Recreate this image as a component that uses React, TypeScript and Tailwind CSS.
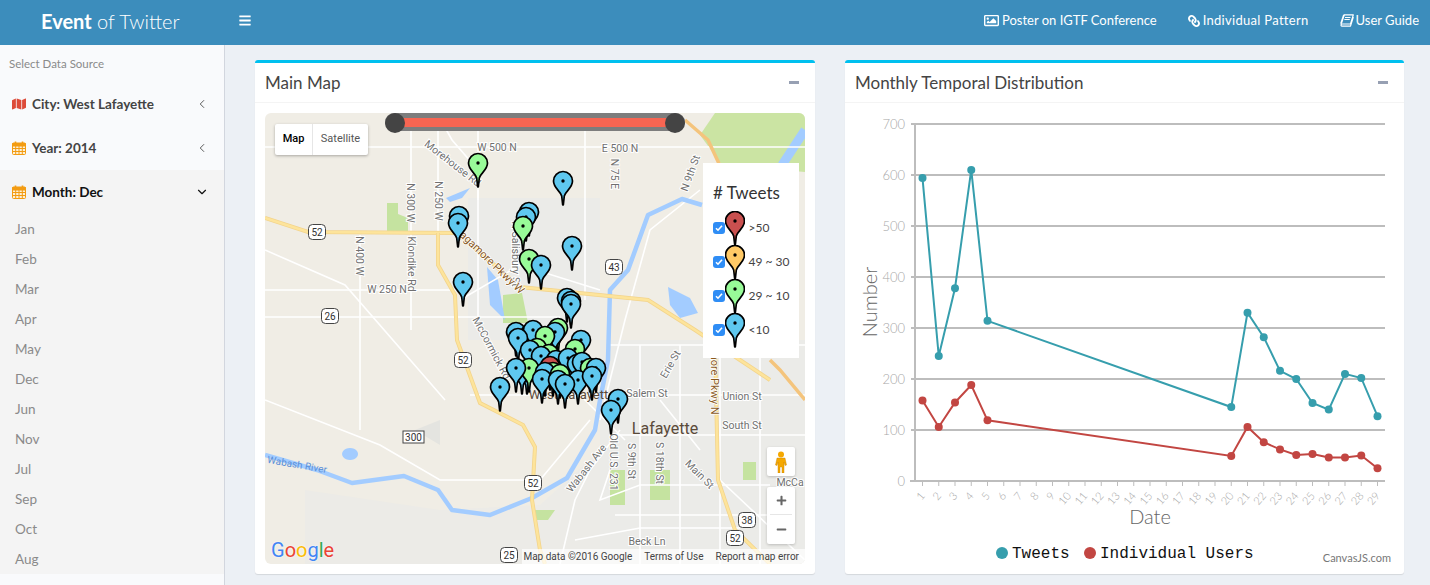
import React from 'react';
import { FaMap, FaBars, FaRegImage, FaLink, FaMinus, FaPlus } from 'react-icons/fa';
import { ChevronLeft, ChevronDown } from 'lucide-react';

const UI_FONT = { fontFamily: '"Lato", "Noto Sans", sans-serif' };
const months = ['Jan', 'Feb', 'Mar', 'Apr', 'May', 'Dec', 'Jun', 'Nov', 'Jul', 'Sep', 'Oct', 'Aug'];

const BLUE = '#5fc8ef';
const GREEN = '#98fb98';
const RED = '#c9504f';
const ORANGE = '#ffc966';

const Calendar = () => (
  <svg width="14" height="14" viewBox="0 0 14 14" fill="none" stroke="#f39c12" strokeWidth="1">
    <rect x="0.5" y="2" width="13" height="11.5" rx="1" fill="#fdf0d8" />
    <path d="M0.5 2.5h13v2.5h-13z" fill="#f39c12" />
    <path d="M0.5 7.5h13M0.5 10.500h13M3.7 5v8.5M7 5v8.5M10.3 5v8.5" />
    <path d="M3.5 0.5v3M10.5 0.5v3" strokeWidth="1.6" />
  </svg>
);

const BookIcon = () => (
  <svg width="14" height="13" viewBox="0 0 14 13" fill="none" stroke="#fff" strokeWidth="1.2" strokeLinejoin="round">
    <path d="M4 0.8H13.300L10.500 10H2.200C0.800 10 0.500 11.800 1.800 12.200H10.500L13.300 3" />
    <path d="M4 0.800L1 9.800" strokeWidth="1.800" />
    <path d="M5 3.500H10.500M4.400 5.500H9.800" strokeWidth="1" />
  </svg>
);

const Pin = ({ x, y, fill }: { x: number; y: number; fill: string }) => (
  <g transform={`translate(${x} ${y})`}>
    <path d="M-0.300 0L-1.300 -9C-2.500 -14 -9.500 -17 -9.500 -24A9.500 9.500 0 1 1 9.500 -24C9.500 -17 2.500 -14 1.300 -9L0.300 0Z" fill={fill} stroke="#000" strokeWidth="1.700" strokeLinejoin="round" />
    <circle cx="0" cy="-24" r="1.700" fill="#000" />
  </g>
);

const pins: [number, number, string][] = [
  [478, 187, GREEN], [563, 205, BLUE], [459, 240, BLUE], [458, 247, BLUE],
  [529, 236, BLUE], [526, 241, BLUE], [523, 250, GREEN], [572, 270, BLUE],
  [529, 283, GREEN], [541, 289, BLUE], [463, 306, BLUE],
  [567, 322, BLUE], [571, 325, BLUE], [571, 328, BLUE],
  [516, 356, BLUE], [530, 358, GREEN], [533, 354, BLUE], [558, 352, GREEN], [555, 356, BLUE],
  [545, 360, GREEN], [518, 362, BLUE], [581, 364, BLUE], [537, 372, GREEN], [530, 374, BLUE],
  [575, 373, GREEN], [549, 378, GREEN], [541, 380, BLUE], [556, 384, BLUE], [550, 390, RED], [568, 382, BLUE],
  [577, 388, BLUE], [582, 386, BLUE], [527, 394, BLUE], [522, 394, BLUE], [529, 392, GREEN], [516, 392, BLUE],
  [590, 392, GREEN], [596, 392, BLUE], [553, 396, GREEN], [545, 396, BLUE], [560, 398, GREEN],
  [542, 403, BLUE], [558, 404, BLUE], [578, 404, BLUE], [592, 400, BLUE], [565, 408, BLUE],
  [500, 411, BLUE], [618, 423, BLUE], [611, 434, BLUE],
];

const whiteRoads = [
  'M265 147H805', 'M265 317H560', 'M265 290H470', 'M411 113V330', 'M438 113V235', 'M360 235V430', 'M478 113V200',
  'M265 250L345 285L445 400', 'M478 170L452 140L438 115', 'M478 190V330', 'M585 113V300', 'M460 300L520 265L600 290',
  'M265 400L380 445L440 480H540L590 420', 'M470 395H610', 'M605 395H805', 'M610 435H805', 'M640 345V564', 'M680 345V564',
  'M720 345V564', 'M760 345V564', 'M610 345H805', 'M615 515H770', 'M560 564L575 500L590 470L620 430',
  'M720 480L805 560', 'M580 395L625 440', 'M610 470L600 500L640 485H770', 'M700 190L650 230L625 320L600 420',
  'M575 540L640 528H740', 'M660 400L700 450',
];

const Shield = ({ x, y, t }: { x: number; y: number; t: string }) => (
  <g>
    <rect x={x - 8.5} y={y - 7.5} width="17" height="15" rx="4" fill="#fff" stroke="#444" />
    <text x={x} y={y + 3.5} textAnchor="middle" fontSize="10" fill="#333">{t}</text>
  </g>
);

const mapLabels: [string, number, number, number][] = [
  ['W 500 N', 497, 151, 0], ['E 500 N', 620, 152, 0], ['N 300 W', 411, 207, 90], ['N 250 W', 439, 205, 90],
  ['N 400 W', 360, 260, 90], ['Klondike Rd', 412, 268, 90], ['W 250 N', 387, 293, 0], ['Morehouse Rd', 453, 167, 38],
  ['N 75 E', 615, 178, 90], ['N 9th St', 690, 177, -70], ['N Salisbury St', 516, 258, 90], ['McCormick Rd', 492, 352, 62],
  ['Salem St', 647, 397, 0], ['Erie St', 670, 368, -60], ['Union St', 742, 400, 0], ['South St', 742, 429, 0],
  ['Old U.S. 231', 614, 466, 90], ['S 9th St', 632, 465, 90], ['S 18th St', 660, 467, 90], ['Main St', 700, 478, 45],
  ['Wabash Ave', 586, 472, -52], ['Beck Ln', 647, 545, 0], ['McCa', 790, 486, 0],
];

const MapDrawing = () => (
  <svg viewBox="265 113 540 451" className="block w-full h-full" style={{ fontFamily: 'Roboto, sans-serif' }}>
    <rect x="265" y="113" width="540" height="451" fill="#f0ede5" />
    <path d="M468 198H600V340H468Z" fill="#ebebe8" />
    <path d="M600 340H805V564H600Z" fill="#ebebe8" />
    <path d="M305 490L440 510L540 505L600 450V564H305Z" fill="#ecebe7" />
    <path d="M715 113H805V172L722 165L700 135Z" fill="#cbe4a3" />
    <path d="M387 203H398V214L408 218V232H387Z" fill="#c5e3a0" />
    <path d="M503 295L522 293L528 323L503 323Z" fill="#c5e3a0" />
    <path d="M650 470L670 470V500H650Z" fill="#c5e3a0" />
    <path d="M610 470H625V505H610Z" fill="#c5e3a0" />
    <path d="M535 510H555L548 520H535Z" fill="#c5e3a0" />
    <path d="M743 462H756V480H743Z" fill="#c5e3a0" />
    <path d="M415 430L440 445V420Z" fill="#e4e4e0" />
    <path d="M446 198L470 188L462 198L450 202Z" fill="#a3ccff" />
    <path d="M487 267L498 280L505 320L490 305Z" fill="#a3ccff" />
    <path d="M668 287L690 298L698 313L680 318L670 305Z" fill="#a3ccff" />
    <path d="M350 448a8 6 0 1 0 0.1 0Z" fill="#a3ccff" />
    <path d="M805 130L782 165" stroke="#a3ccff" strokeWidth="9" fill="none" />
    {whiteRoads.map((d) => <path key={d} d={d} stroke="#fff" strokeWidth="1.6" fill="none" />)}
    <path d="M702 205L682 199L648 215L628 270L610 290L608 360L600 400L595 430L567 478L532 498L490 515L452 510L438 490L404 476L352 483L317 470L265 455" stroke="#a3ccff" strokeWidth="4.5" fill="none" strokeLinejoin="round" />
    <path d="M265 218L308 232L457 233L520 287L648 300L695 330L770 380" stroke="#f3d48c" strokeWidth="4" fill="none" />
    <path d="M265 218L308 232L457 233L520 287L648 300L695 330L770 380" stroke="#fde49b" strokeWidth="2.4" fill="none" />
    <path d="M438 233V265L455 295L457 340L480 403L523 425L535 447L532 500L540 550L545 564" stroke="#f3d48c" strokeWidth="4" fill="none" />
    <path d="M438 233V265L455 295L457 340L480 403L523 425L535 447L532 500L540 550L545 564" stroke="#fde49b" strokeWidth="2.4" fill="none" />
    <path d="M685 120L708 140L722 170M770 360L780 370L805 400" stroke="#f4c47c" strokeWidth="3.5" fill="none" />
    <path d="M715 345L718 480L735 530L770 564" stroke="#f3d48c" strokeWidth="4" fill="none" />
    <path d="M715 345L718 480L735 530L770 564" stroke="#fde49b" strokeWidth="2.4" fill="none" />
    {mapLabels.map(([t, x, y, r]) => (
      <text key={t} x={x} y={y} textAnchor="middle" fontSize="10.5" fill="#707070" stroke="#fff" strokeWidth="2" style={{ paintOrder: 'stroke' }} transform={`rotate(${r} ${x} ${y - 4})`}>{t}</text>
    ))}
    <text x="490" y="264" textAnchor="middle" fontSize="11" fill="#8a5a1e" stroke="#fff" strokeWidth="1.5" style={{ paintOrder: 'stroke' }} transform="rotate(44 490 260)">Sagamore Pkwy W</text>
    <text x="715" y="374" textAnchor="middle" fontSize="11" fill="#8a5a1e" stroke="#fff" strokeWidth="1.5" style={{ paintOrder: 'stroke' }} transform="rotate(90 715 370)">Sagamore Pkwy N</text>
    <text x="297" y="468" textAnchor="middle" fontSize="10" fill="#5a8fd8" transform="rotate(10 297 465)">Wabash River</text>
    <text x="572" y="399" textAnchor="middle" fontSize="13" fill="#5a4a3a">West Lafayette</text>
    <text x="665" y="434" textAnchor="middle" fontSize="16" fill="#5a4a3a">Lafayette</text>
    <Shield x={317} y={232} t="52" />
    <Shield x={330} y={316} t="26" />
    <Shield x={614} y={267} t="43" />
    <Shield x={463} y={360} t="52" />
    <Shield x={533} y={483} t="52" />
    <Shield x={747} y={520} t="38" />
    <Shield x={735} y={538} t="52" />
    <Shield x={509} y={555} t="25" />
    <rect x="403" y="431" width="21" height="12" fill="#fff" stroke="#444" />
    <text x="413.5" y="441" textAnchor="middle" fontSize="10" fill="#333">300</text>
    {pins.map(([x, y, c], i) => <Pin key={i} x={x} y={y} fill={c} />)}
  </svg>
);

const legendRows = [
  { label: '>50', color: RED },
  { label: '49 ~ 30', color: ORANGE },
  { label: '29 ~ 10', color: GREEN },
  { label: '<10', color: BLUE },
];

const MapPanel = () => (
  <div className="relative h-[451px] overflow-hidden rounded-[6px]">
    <MapDrawing />
    {/* range slider */}
    <div className="absolute left-[120px] top-0 w-[300px] h-[18px] rounded-full bg-[#7d7d7d]">
      <div className="mx-[10px] mt-[5px] h-[9px] bg-[#f76552]" />
      <div className="absolute left-0 top-0 w-5 h-5 rounded-full bg-[#444]" />
      <div className="absolute right-0 top-0 w-5 h-5 rounded-full bg-[#444]" />
    </div>
    {/* map type */}
    <div className="absolute left-[10px] top-[11px] flex h-[31px] bg-white rounded-[2px] shadow-[0_1px_3px_rgba(0,0,0,0.3)] text-[11px]" style={{ fontFamily: 'Roboto, sans-serif' }}>
      <div className="w-[38px] flex items-center justify-center font-medium text-black border-r border-[#e6e6e6]">Map</div>
      <div className="w-[55px] flex items-center justify-center text-[#565656]">Satellite</div>
    </div>
    {/* legend */}
    <div className="absolute left-[438px] top-[50px] w-[96px] h-[195px] bg-white pl-[10px] pt-[19px]" style={UI_FONT}>
      <div className="text-[#333] text-[17px] leading-[22px]">
        # Tweets
      </div>
      <div className="mt-[7px] flex flex-col">
        {legendRows.map((r) => (
          <div key={r.label} className="flex items-center h-[34px] text-[12px] text-[#444]">
            <span className="w-3 h-3 rounded-[3px] bg-[#2f8df5] flex items-center justify-center">
              <svg width="8" height="8" viewBox="0 0 8 8" fill="none" stroke="#fff" strokeWidth="1.6"><path d="M1 4.2l2 2 4-4.5" /></svg>
            </span>
            <svg width="20" height="35" viewBox="-10 -34 20 35" className="ml-[-0.5px] mr-[4px]">
              <Pin x={0} y={0} fill={r.color} />
            </svg>
            <span>{r.label}</span>
          </div>
        ))}
      </div>
    </div>
    {/* pegman + zoom */}
    <div className="absolute left-[502px] top-[334px] w-[28px] h-[29px] bg-white rounded-[2px] shadow-[0_1px_3px_rgba(0,0,0,0.2)] flex items-center justify-center">
      <svg width="12" height="22" viewBox="0 0 12 22">
        <circle cx="6" cy="3.5" r="3" fill="#f5a800" />
        <path d="M2 7h8l1.5 7-1.5.5L9 11v11H7v-6H5v6H3V11l-1 3.500L.5 14z" fill="#f5a800" stroke="#c47f00" strokeWidth="0.4" />
      </svg>
    </div>
    <div className="absolute left-[502px] top-[374px] w-[28px] h-[57px] bg-white rounded-[2px] shadow-[0_1px_3px_rgba(0,0,0,0.2)] flex flex-col items-center text-[#666]">
      <div className="h-[28px] w-[22px] flex items-center justify-center border-b border-[#e6e6e6]"><FaPlus size={11} /></div>
      <div className="h-[28px] flex items-center justify-center"><FaMinus size={11} /></div>
    </div>
    {/* logo */}
    <div className="absolute left-[6px] bottom-[2px] text-[20px] leading-[24px]" style={{ fontFamily: 'Roboto, sans-serif', textShadow: '0 0 2px #fff' }}>
      <span className="text-[#4285f4]">G</span>
      <span className="text-[#ea4335]">o</span>
      <span className="text-[#fbbc05]">o</span>
      <span className="text-[#4285f4]">g</span>
      <span className="text-[#34a853]">l</span>
      <span className="text-[#ea4335]">e</span>
    </div>
    {/* attribution */}
    <div className="absolute right-0 bottom-0 h-[15px] flex items-center gap-[12px] pl-[1px] pr-[6px] bg-white/70 text-[10px] text-[#444]" style={{ fontFamily: 'Roboto, sans-serif' }}>
      <span>Map data ©2016 Google</span>
      <span>Terms of Use</span>
      <span>Report a map error</span>
    </div>
  </div>
);

const tweets: [number, number][] = [[1, 594], [2, 245], [3, 378], [4, 610], [5, 314], [20, 145], [21, 330], [22, 282], [23, 216], [24, 200], [25, 153], [26, 140], [27, 210], [28, 202], [29, 127]];
const users: [number, number][] = [[1, 158], [2, 106], [3, 154], [4, 188], [5, 119], [20, 49], [21, 106], [22, 76], [23, 62], [24, 51], [25, 53], [26, 46], [27, 46], [28, 50], [29, 25]];
const px = (d: number) => 922.5 + (d - 1) * 16.25;
const py = (v: number) => 481 - v * 0.51;

const Series = ({ data, color }: { data: [number, number][]; color: string }) => (
  <g>
    <polyline points={data.map(([d, v]) => `${px(d)},${py(v)}`).join(' ')} fill="none" stroke={color} strokeWidth="2" />
    {data.map(([d, v]) => <circle key={d} cx={px(d)} cy={py(v)} r="4" fill={color} />)}
  </g>
);

const Chart = () => (
  <svg viewBox="845 103 559 471" className="block w-full h-full" style={{ fontFamily: 'Lato, sans-serif' }}>
    {[100, 200, 300, 400, 500, 600, 700].map((v) => (
      <line key={v} x1="911" x2="1385" y1={py(v)} y2={py(v)} stroke="#bdbdbd" strokeWidth="2" />
    ))}
    <line x1="915" x2="915" y1="123" y2="482" stroke="#bdbdbd" strokeWidth="2" />
    <line x1="910" x2="1385" y1="481" y2="481" stroke="#bdbdbd" strokeWidth="2" />
    {[0, 100, 200, 300, 400, 500, 600, 700].map((v) => (
      <text key={v} x="905" y={py(v) + 5} textAnchor="end" fontSize="13" fontWeight="300" fill="#a8a8a8">{v}</text>
    ))}
    {Array.from({ length: 29 }, (_, i) => i + 1).map((d) => (
      <g key={d}>
        <line x1={px(d)} x2={px(d)} y1="481" y2="486" stroke="#bdbdbd" />
        <text x={px(d) + 3} y="496" textAnchor="end" fontSize="11" fontWeight="300" fill="#a8a8a8" transform={`rotate(-50 ${px(d) + 3} 496)`}>{d}</text>
      </g>
    ))}
    <text x="877" y="302" textAnchor="middle" fontSize="20" fontWeight="300" fill="#666" transform="rotate(-90 877 302)">Number</text>
    <text x="1150" y="524" textAnchor="middle" fontSize="20" fontWeight="300" fill="#666">Date</text>
    <Series data={tweets} color="#369ead" />
    <Series data={users} color="#c24642" />
    <circle cx="1002" cy="553" r="6" fill="#369ead" />
    <text x="1012" y="558" fontSize="16" fill="#111" style={{ fontFamily: '"Liberation Mono", monospace' }}>Tweets</text>
    <circle cx="1090" cy="553" r="6" fill="#c24642" />
    <text x="1100" y="558" fontSize="16" fill="#111" style={{ fontFamily: '"Liberation Mono", monospace' }}>Individual Users</text>
    <text x="1391" y="562" textAnchor="end" fontSize="11" fill="#777">CanvasJS.com</text>
  </svg>
);

const Card = ({ title, children }: { title: string; children: React.ReactNode }) => (
  <div className="bg-white border-t-[3px] border-[#00c0ef] rounded-[3px] shadow-[0_1px_1px_rgba(0,0,0,0.1)]">
    <div className="h-[40px] flex items-center justify-between pl-[10px] pr-[16px] border-b border-[#f4f4f4]">
      <h3 className="text-[17px] text-[#444]">{title}</h3>
      <span className="w-[10px] h-[2.5px] bg-[#97a0b3]" />
    </div>
    {children}
  </div>
);

const SideItem = ({ icon, label, active }: { icon: React.ReactNode; label: string; active?: boolean }) => (
  <div className={`h-[44px] flex items-center pl-[12px] pr-[15px] text-[13.5px] font-bold ${active ? 'bg-[#f4f4f4] text-[#111]' : 'text-[#444]'}`}>
    <span className="w-[20px] flex items-center">{icon}</span>
    <span className="flex-1">{label}</span>
    {active ? <ChevronDown size={14} strokeWidth={2} /> : <ChevronLeft size={14} strokeWidth={1.5} />}
  </div>
);

export default function App() {
  return (
    <div className="w-[1430px] h-[585px] overflow-hidden flex flex-col bg-[#ecf0f5]" style={UI_FONT}>
      <header className="h-[45px] shrink-0 bg-[#3c8dbc] flex items-center pb-[4px] text-white">
        <div className="w-[239px] pl-[41px] text-[20px] font-light">
          <b className="font-bold">Event</b> of Twitter
        </div>
        <FaBars size={13} className="w-[12px]" />
        <nav className="ml-auto flex items-center gap-[31px] pr-[11px] text-[13px]">
          <span className="flex items-center gap-[3px]"><FaRegImage size={15} />Poster on IGTF Conference</span>
          <span className="flex items-center gap-[3px] tracking-[0.3px]"><FaLink size={12} className="-scale-x-100" />Individual Pattern</span>
          <span className="flex items-center gap-[2px]"><BookIcon />User Guide</span>
        </nav>
      </header>
      <div className="flex-1 flex min-h-0">
        <aside className="w-[225px] shrink-0 bg-[#f9fafc] border-r border-[#d2d6de]">
          <div className="h-[37px] pl-[9px] pt-[12px] text-[11.5px] leading-[14px] text-[#8a8a8a]">Select Data Source</div>
          <SideItem icon={<FaMap size={14} className="text-[#dd4b39]" />} label="City: West Lafayette" />
          <SideItem icon={<Calendar />} label="Year: 2014" />
          <SideItem icon={<Calendar />} label="Month: Dec" active />
          <ul className="bg-[#f4f4f4] h-[360px]">
            {months.map((m) => (
              <li key={m} className="h-[30px] pl-[15px] flex items-center text-[13.5px] text-[#8a8a8a]">{m}</li>
            ))}
          </ul>
        </aside>
        <main className="flex-1 grid grid-cols-[560px_559px] gap-[30px] pl-[30px] pt-[15px]">
          <div>
            <Card title="Main Map">
              <div className="p-[10px]"><MapPanel /></div>
            </Card>
          </div>
          <div>
            <Card title="Monthly Temporal Distribution">
              <div className="h-[471px]"><Chart /></div>
            </Card>
          </div>
        </main>
      </div>
    </div>
  );
}
